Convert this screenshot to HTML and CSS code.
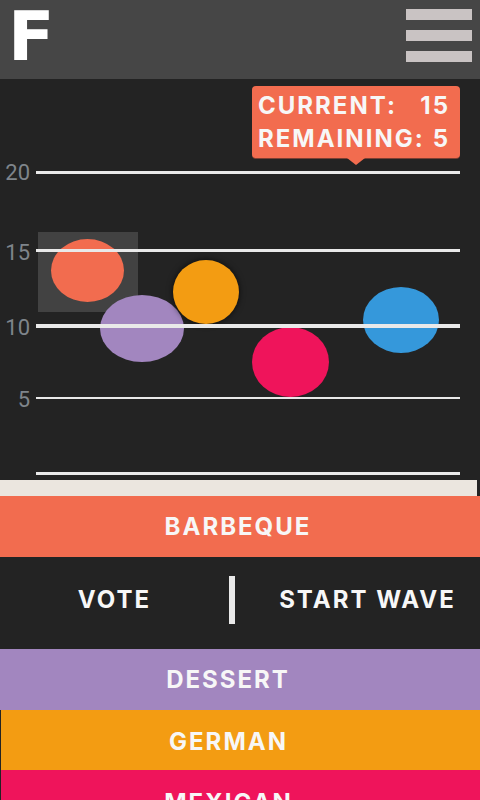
FILE: index.html
```html
<!DOCTYPE html>
<html lang="en">
<head>
<meta charset="utf-8">
<meta name="viewport" content="width=device-width, initial-scale=1">
<title>F</title>
<link rel="stylesheet" href="styles.css">
</head>
<body>
<header class="topbar">
  <a class="logo" href="#">F</a>
  <button class="menu" type="button" aria-label="Menu">
    <span class="menu-line"></span>
    <span class="menu-line"></span>
    <span class="menu-line"></span>
  </button>
</header>
<main>
  <section class="chart">
    <div class="axis">
      <span>20</span>
      <span>15</span>
      <span>10</span>
      <span>5</span>
    </div>
    <svg class="plot" viewBox="0 0 424 304" preserveAspectRatio="none" aria-hidden="true">
      <rect x="2" y="61" width="100" height="80" fill="#424242"/>
      <ellipse cx="51.5" cy="99.5" rx="36.5" ry="31.5" fill="#f26c4f"/>
      <ellipse cx="106" cy="157.5" rx="42" ry="33.5" fill="#a286bf"/>
      <ellipse class="raised" cx="170" cy="121" rx="33" ry="32" fill="#f39c12"/>
      <ellipse cx="254.5" cy="191" rx="38.5" ry="35" fill="#ef145b"/>
      <ellipse cx="365" cy="149" rx="38" ry="33" fill="#3598db"/>
      <g fill="#e9e9e9">
        <rect x="0" y="0" width="424" height="3"/>
        <rect x="0" y="78" width="424" height="3"/>
        <rect x="0" y="153" width="424" height="4"/>
        <rect x="0" y="226" width="424" height="2"/>
        <rect x="0" y="301" width="424" height="3"/>
      </g>
    </svg>
    <dl class="tooltip">
      <div class="stat"><dt>CURRENT:</dt><dd>15</dd></div>
      <div class="stat"><dt>REMAINING:</dt><dd>5</dd></div>
    </dl>
  </section>
  <div class="strip"></div>
  <button class="bar barbeque" type="button">BARBEQUE</button>
  <div class="actions">
    <button class="action" type="button">VOTE</button>
    <span class="divider"></span>
    <button class="action start" type="button">START WAVE</button>
  </div>
  <button class="bar dessert" type="button">DESSERT</button>
  <button class="bar german" type="button">GERMAN</button>
  <button class="bar mexican" type="button">MEXICAN</button>
</main>
</body>
</html>
```
FILE: styles.css
```css
* {
  box-sizing: border-box;
}

body {
  margin: 0;
  background: #232323;
  color: #f7f7f7;
  font: 700 24px/32px Inter, "Open Sans", sans-serif;
}

button {
  border: 0;
  padding: 0;
  background: none;
  color: inherit;
  font: inherit;
  letter-spacing: 2px;
  cursor: pointer;
}

.topbar {
  display: flex;
  justify-content: space-between;
  align-items: flex-start;
  height: 79px;
  padding: 0 8px;
  background: #464646;
}

.logo {
  color: #fff;
  font: 700 68px/74px "DejaVu Sans", sans-serif;
  text-decoration: none;
}

.menu {
  display: grid;
  gap: 10px;
  width: 66px;
  padding-top: 9px;
}

.menu-line {
  height: 11px;
  background: #c9c3c3;
}

.chart {
  position: relative;
  display: flex;
  gap: 6px;
  padding: 54px 20px 5px 0;
}

.axis {
  display: grid;
  grid-template-rows: 80px 80px 70px 74px;
  align-items: center;
  width: 30px;
  color: #7f858b;
  font: 400 22px/24px Roboto, sans-serif;
  text-align: right;
}

.plot {
  flex: 1;
  min-width: 0;
  height: 304px;
  margin-top: 38px;
}

.raised {
  filter: drop-shadow(0 0 3px rgba(0, 0, 0, 0.7));
}

.tooltip {
  position: absolute;
  top: 7px;
  right: 20px;
  width: 208px;
  margin: 0;
  padding: 3px 10px 3px 6px;
  border-radius: 4px;
  background: #f26c4f;
  box-shadow: 0 1px 0 #7c3f32;
  letter-spacing: 2px;
}

.tooltip::after {
  content: "";
  position: absolute;
  top: 100%;
  left: 50%;
  margin-left: -9px;
  border: 9px solid transparent;
  border-top: 7px solid #f26c4f;
  border-bottom: 0;
}

.stat {
  display: flex;
  justify-content: space-between;
  line-height: 33px;
}

.stat dd {
  margin: 0;
}

.strip {
  height: 16px;
  margin-right: 3px;
  background: #ebe6df;
}

.bar {
  display: block;
  width: 100%;
  height: 61px;
}

.barbeque {
  padding-right: 4px;
  background: #f26c4f;
}

.dessert,
.german,
.mexican {
  padding-right: 24px;
}

.dessert {
  background: #a286bf;
}

.german,
.mexican {
  padding-top: 4px;
  border-left: 1px solid #232323;
}

.german {
  height: 60px;
  background: #f39c12;
}

.mexican {
  background: #ef145b;
}

.actions {
  display: grid;
  grid-template-columns: 229fr 6px 245fr;
  align-items: center;
  height: 92px;
  padding-bottom: 6px;
}

.start {
  padding-left: 20px;
}

.divider {
  height: 48px;
  background: #e9e9e9;
}
```
